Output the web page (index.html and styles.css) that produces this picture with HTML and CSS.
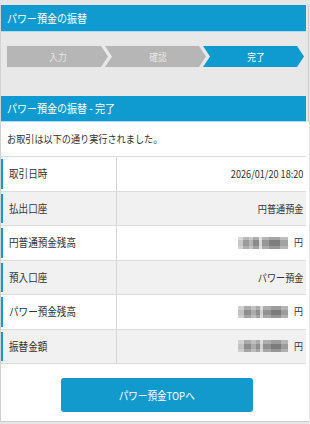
FILE: index.html
```html
<!DOCTYPE html>
<html lang="ja">
<head>
<meta charset="utf-8">
<link rel="stylesheet" href="styles.css">
</head>
<body>
<div class="frame">
  <div class="hdr"><span class="t">パワー預金の振替</span></div>
  <div class="steps">
    <div class="step first"><span class="t tc">入力</span></div>
    <div class="step"><span class="t tc">確認</span></div>
    <div class="step active"><span class="t tc">完了</span></div>
  </div>
  <div class="hdr hdr2"><span class="t">パワー預金の振替 - 完了</span></div>
  <div class="card">
    <p class="msg"><span class="t">お取引は以下の通り実行されました。</span></p>
    <div class="table">
      <div class="row"><div class="lbl"><span class="t">取引日時</span></div><div class="val"><span class="t tr">2026/01/20 18:20</span></div></div>
      <div class="row alt"><div class="lbl"><span class="t">払出口座</span></div><div class="val"><span class="t tr">円普通預金</span></div></div>
      <div class="row"><div class="lbl"><span class="t">円普通預金残高</span></div><div class="val"><span class="blur"></span><span class="yen">円</span></div></div>
      <div class="row alt"><div class="lbl"><span class="t">預入口座</span></div><div class="val"><span class="t tr">パワー預金</span></div></div>
      <div class="row"><div class="lbl"><span class="t">パワー預金残高</span></div><div class="val"><span class="blur b2"></span><span class="yen">円</span></div></div>
      <div class="row alt"><div class="lbl"><span class="t">振替金額</span></div><div class="val"><span class="blur b2"></span><span class="yen">円</span></div></div>
    </div>
    <div class="btn-wrap"><a class="btn"><span class="t tc">パワー預金TOPへ</span></a></div>
  </div>
</div>
</body>
</html>
```

FILE: styles.css
```css
* { box-sizing: border-box; }
html, body { margin: 0; padding: 0; }
body {
  background: #e6e6e6;
  width: 310px;
  height: 424px;
  overflow: hidden;
  font-family: "Noto Sans CJK JP", "Noto Sans", sans-serif;
  color: #333;
}
.t {
  display: inline-block;
  white-space: nowrap;
  transform: scaleX(0.87);
  transform-origin: left center;
}
.t.tr { transform-origin: right center; }
.t.tc { transform-origin: center center; }
.frame {
  margin: 5px 0 0 0;
  width: 309px;
  border-right: 1px solid #cfcfcf;
  border-left: 1px solid #d2d2d2;
}
.hdr {
  width: 305px;
  height: 27px;
  background: #0f9bcf;
  border-bottom: 1px solid #a9dcef;
  color: #fff;
  font-size: 11.5px;
  line-height: 26px;
  padding-left: 6px;
}
.hdr2 { height: 26px; line-height: 25px; }
.steps {
  height: 64px;
  padding: 14px 0 0 6px;
  display: flex;
  background: #e8e8e8;
  width: 305px;
}
.step {
  width: 101px;
  height: 21px;
  margin-left: -3px;
  background: #b6b6b6;
  color: #e6e6e6;
  font-size: 10px;
  line-height: 21px;
  text-align: center;
  clip-path: polygon(0 0, 94px 0, 101px 50%, 94px 100%, 0 100%, 7px 50%);
  padding-left: 4px;
}
.step.first {
  margin-left: 0;
  padding-left: 0;
  clip-path: polygon(0 0, 94px 0, 101px 50%, 94px 100%, 0 100%);
}
.step.active { background: #0f9bcf; color: #fff; }
.card {
  background: #fff;
  width: 308px;
  height: 300px;
  border-bottom: 1px solid #cfcfcf;
}
.msg {
  margin: 0;
  height: 34px;
  line-height: 34px;
  padding-left: 6px;
  font-size: 10.5px;
  color: #333;
}
.table {
  width: 305px;
  border-bottom: 1px solid #dcdcdc;
}
.row {
  display: grid;
  grid-template-columns: 116px 1fr;
  height: 34.5px;
  border-top: 1px solid #dcdcdc;
}
.row.alt { background: #f1f1f1; }
.lbl {
  position: relative;
  border-right: 1px solid #d6d6d6;
  padding-left: 8px;
  font-size: 11px;
  line-height: 33px;
  color: #333;
}
.lbl::before {
  content: "";
  position: absolute;
  left: 0;
  top: 2px;
  bottom: 2px;
  width: 2px;
  background: #1399cb;
}
.val {
  display: flex;
  justify-content: flex-end;
  align-items: center;
  padding-right: 3px;
  font-size: 10.5px;
  color: #333;
}
.blur {
  display: inline-block;
  width: 50px;
  height: 12px;
  margin-right: 6px;
  background:
    linear-gradient(180deg, rgba(255,255,255,0.3) 0 25%, rgba(0,0,0,0) 25% 75%, rgba(255,255,255,0.2) 75% 100%),
    linear-gradient(90deg, #c8c8c8 0 10%, #9a9a9a 10% 22%, #b4b4b4 22% 30%, #8a8a8a 30% 42%, #d8d8d8 42% 48%, #969696 48% 62%, #7e7e7e 62% 84%, #a2a2a2 84% 100%);
}
.b2 {
  background:
    linear-gradient(180deg, rgba(255,255,255,0.25) 0 30%, rgba(0,0,0,0) 30% 75%, rgba(255,255,255,0.2) 75% 100%),
    linear-gradient(90deg, #c2c2c2 0 12%, #8e8e8e 12% 26%, #ababab 26% 36%, #8e8e8e 36% 44%, #d2d2d2 44% 50%, #919191 50% 66%, #7c7c7c 66% 86%, #9c9c9c 86% 100%);
}
.yen { font-size: 9px; }
.btn-wrap {
  display: flex;
  justify-content: center;
  padding: 14px 0 0 0;
  width: 311px;
}
.btn {
  display: block;
  width: 192px;
  height: 34px;
  border-radius: 3px;
  background: #129acd;
  color: #fff;
  font-size: 11px;
  line-height: 34px;
  text-align: center;
}
```
